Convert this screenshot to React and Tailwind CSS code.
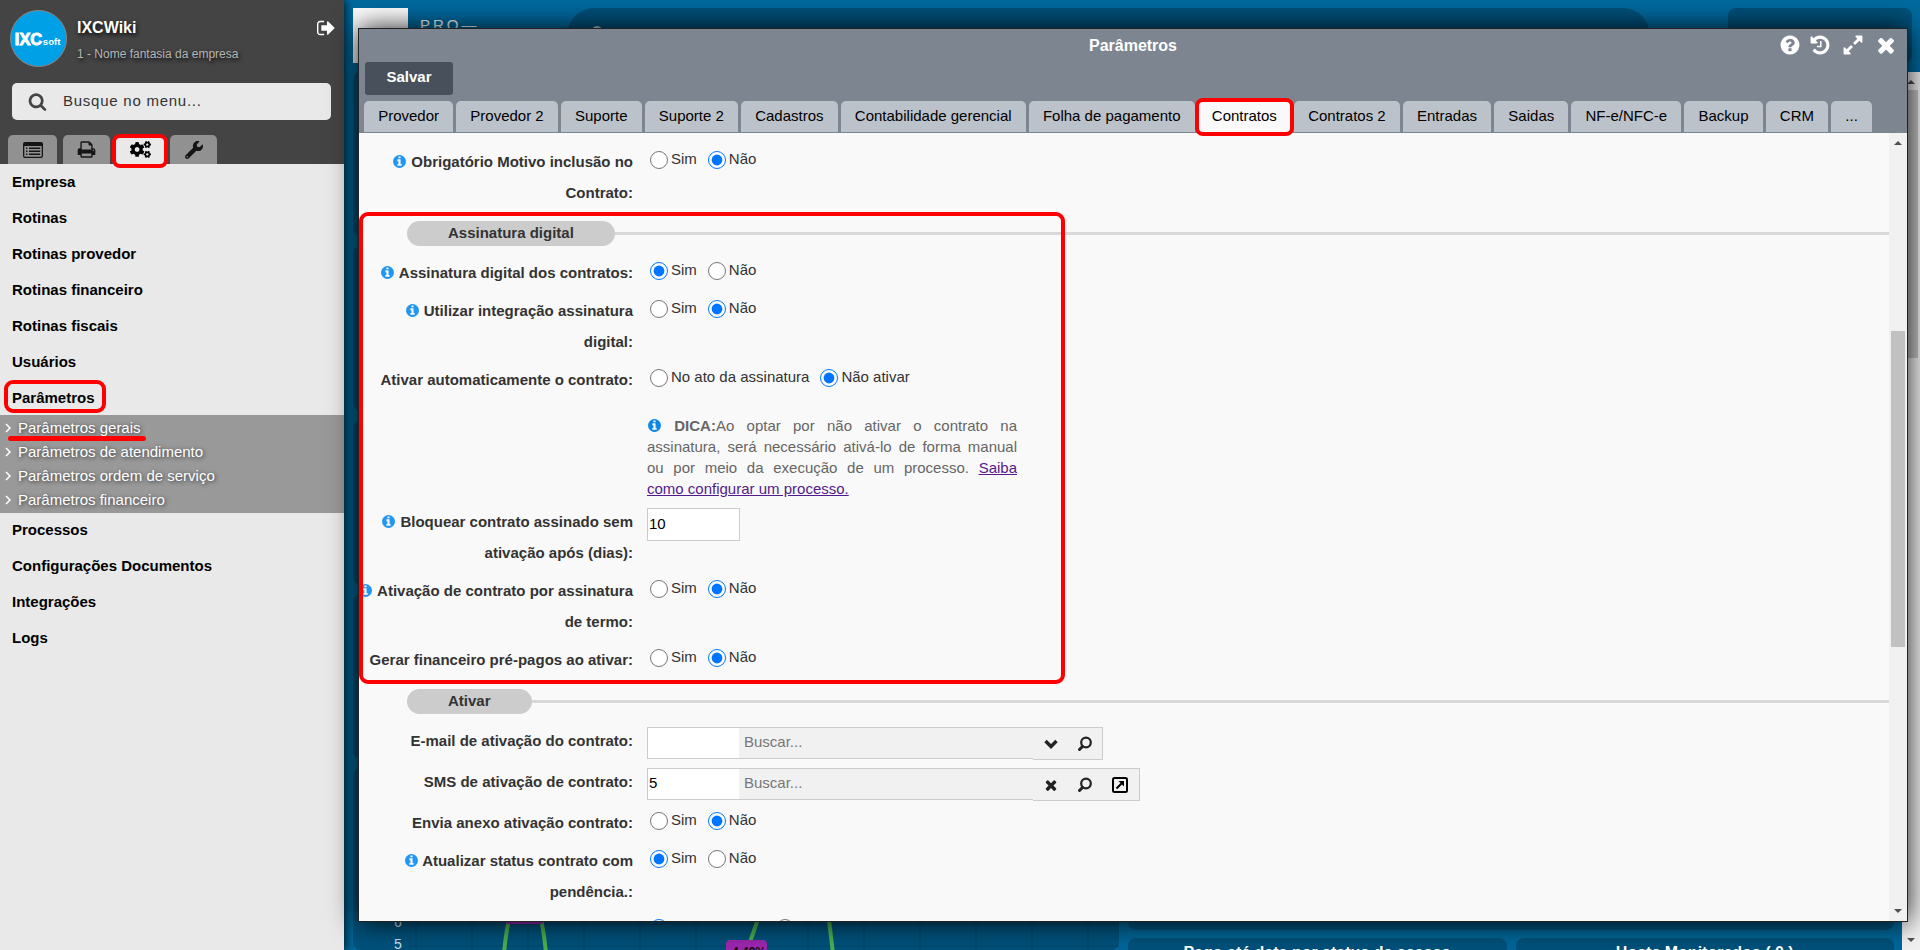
import React, { useState } from "react";
import { FaCogs, FaWrench } from "react-icons/fa";

const ICONS = {
  info:
    "M1152 1376v-160q0-14-9-23t-23-9h-96v-512q0-14-9-23t-23-9h-320q-14 0-23 9t-9 23v160q0 14 9 23t23 9h96v320h-96q-14 0-23 9t-9 23v160q0 14 9 23t23 9h448q14 0 23-9t9-23zm-128-896v-160q0-14-9-23t-23-9h-192q-14 0-23 9t-9 23v160q0 14 9 23t23 9h192q14 0 23-9t9-23zm640 416q0 209-103 385.5t-279.5 279.5-385.5 103-385.5-103-279.5-279.5-103-385.5 103-385.5 279.5-279.5 385.5-103 385.5 103 279.5 279.5 103 385.5z",
  help:
    "M1024 1376v-192q0-14-9-23t-23-9h-192q-14 0-23 9t-9 23v192q0 14 9 23t23 9h192q14 0 23-9t9-23zm256-672q0-88-55.5-163t-138.5-116-170-41q-243 0-371 213-15 24 8 42l132 100q7 6 19 6 16 0 25-12 53-68 86-92 34-24 86-24 48 0 85.5 26t37.5 59q0 38-20 61t-68 45q-63 28-115.5 86.5t-52.5 125.5v36q0 14 9 23t23 9h192q14 0 23-9t9-23q0-19 21.5-49.5t54.5-49.5q32-18 49-28.5t46-35 44.5-48 28-60.5 12.5-81zm384 192q0 209-103 385.5t-279.5 279.5-385.5 103-385.5-103-279.5-279.5-103-385.5 103-385.5 279.5-279.5 385.5-103 385.5 103 279.5 279.5 103 385.5z",
  times:
    "M1490 1322q0 40-28 68l-136 136q-28 28-68 28t-68-28l-294-294-294 294q-28 28-68 28t-68-28l-136-136q-28-28-28-68t28-68l294-294-294-294q-28-28-28-68t28-68l136-136q28-28 68-28t68 28l294 294 294-294q28-28 68-28t68 28l136 136q28 28 28 68t-28 68l-294 294 294 294q28 28 28 68z",
  history:
    "M1664 896q0 156-61 298t-164 245-245 164-298 61q-172 0-327-72.5t-264-204.5q-7-10-6.5-22.5t8.5-20.5l137-138q10-9 25-9 16 2 23 12 73 95 179 147t225 52q104 0 198.5-40.5t163.5-109.5 109.5-163.5 40.5-198.5-40.5-198.5-109.5-163.5-163.5-109.5-198.5-40.5q-98 0-188 35.5t-160 101.5l137 138q31 30 14 69-17 40-59 40h-448q-26 0-45-19t-19-45v-448q0-42 40-59 39-17 69 14l130 129q107-101 244.5-156.5t284.5-55.5q156 0 298 61t245 164 164 245 61 298zm-640-288v448q0 14-9 23t-23 9h-320q-14 0-23-9t-9-23v-64q0-14 9-23t23-9h224v-352q0-14 9-23t23-9h64q14 0 23 9t9 23z",
  expand:
    "M883 1056q0 13-10 23l-332 332 144 144q19 19 19 45t-19 45-45 19h-448q-26 0-45-19t-19-45v-448q0-26 19-45t45-19 45 19l144 144 332-332q10-10 23-10t23 10l114 114q10 10 10 23zm781-864v448q0 26-19 45t-45 19-45-19l-144-144-332 332q-10 10-23 10t-23-10l-114-114q-10-10-10-23t10-23l332-332-144-144q-19-19-19-45t19-45 45-19h448q26 0 45 19t19 45z",
  search:
    "M1216 832q0-185-131.5-316.5t-316.5-131.5-316.5 131.5-131.5 316.5 131.5 316.5 316.5 131.5 316.5-131.5 131.5-316.5zm512 832q0 52-38 90t-90 38q-54 0-90-38l-343-342q-179 124-399 124-143 0-273.5-55.5t-225-150-150-225-55.5-273.5 55.5-273.5 150-225 225-150 273.5-55.5 273.5 55.5 225 150 150 225 55.5 273.5q0 220-124 399l343 343q37 37 37 90z",
  signOut:
    "M640 1440q0 4 1 20t.5 26.5-3 23.5-10 19.5-20.5 6.5h-320q-119 0-203.5-84.5t-84.5-203.5v-704q0-119 84.5-203.5t203.5-84.5h320q13 0 22.5 9.5t9.5 22.5q0 4 1 20t.5 26.5-3 23.5-10 19.5-20.5 6.5h-320q-66 0-113 47t-47 113v704q0 66 47 113t113 47h312l11.5 1 11.5 3 8 5.5 7 9 2 13.5zm928-544q0 26-19 45l-544 544q-19 19-45 19t-45-19-19-45v-288h-448q-26 0-45-19t-19-45v-384q0-26 19-45t45-19h448v-288q0-26 19-45t45-19 45 19l544 544q19 19 19 45z",
  print:
    "M448 1536h896v-256h-896v256zm0-640h896v-384h-160q-40 0-68-28t-28-68v-160h-640v640zm1152 64q0-26-19-45t-45-19-45 19-19 45 19 45 45 19 45-19 19-45zm128 0v416q0 13-9.5 22.5t-22.5 9.5h-224v160q0 40-28 68t-68 28h-960q-40 0-68-28t-28-68v-160h-224q-13 0-22.5-9.5t-9.5-22.5v-416q0-79 56.5-135.5t135.5-56.5h64v-544q0-40 28-68t68-28h672q40 0 88 20t76 48l152 152q28 28 48 76t20 88v256h64q79 0 135.5 56.5t56.5 135.5z",
};

function Icon({ name, className }) {
  return (
    <svg viewBox="0 0 1792 1792" fill="currentColor" aria-hidden="true" className={className}>
      <path d={ICONS[name]} />
    </svg>
  );
}

function ListIcon({ className }) {
  return (
    <svg viewBox="0 0 20 16" fill="currentColor" aria-hidden="true" className={className}>
      <path
        fillRule="evenodd"
        d="M2 0h16a2 2 0 0 1 2 2v12a2 2 0 0 1-2 2H2a2 2 0 0 1-2-2V2a2 2 0 0 1 2-2zM1.300 4v9.700q0 1 1 1h15.400q1 0 1-1V4z"
      />
      <path d="M3 5.500h1.400v1.400H3zM6 5.500h11.200v1.400H6zM3 8.500h1.400v1.400H3zM6 8.500h11.200v1.400H6zM3 11.500h1.400v1.400H3zM6 11.500h11.200v1.400H6z" />
    </svg>
  );
}

function ChevronIcon() {
  return (
    <svg viewBox="0 0 14 14" fill="none" stroke="currentColor" aria-hidden="true" className="h-[14px] w-[14px]">
      <path d="M1.500 4l5.500 5.500L12.500 4" strokeWidth="3.400" />
    </svg>
  );
}

function LensIcon() {
  return (
    <svg viewBox="0 0 16 16" fill="none" stroke="currentColor" aria-hidden="true" className="h-4 w-4">
      <circle cx="9" cy="6.500" r="4.800" strokeWidth="2.200" />
      <path d="M5.500 10.500L2.500 13.500" strokeWidth="3" strokeLinecap="round" />
    </svg>
  );
}

function OpenIcon() {
  return (
    <svg viewBox="0 0 18 18" fill="none" stroke="currentColor" aria-hidden="true" className="h-[18px] w-[18px] text-black">
      <rect x="2" y="2" width="14" height="14" rx="1.500" strokeWidth="2" />
      <path d="M5.500 12.500L11.500 6.500" strokeWidth="2" />
      <path d="M7.500 5H13v5.500z" fill="currentColor" stroke="none" />
    </svg>
  );
}

const menuTop = ["Empresa", "Rotinas", "Rotinas provedor", "Rotinas financeiro", "Rotinas fiscais", "Usuários"];
const submenu = ["Parâmetros gerais", "Parâmetros de atendimento", "Parâmetros ordem de serviço", "Parâmetros financeiro"];
const menuBottom = ["Processos", "Configurações Documentos", "Integrações", "Logs"];

const tabs = [
  "Provedor",
  "Provedor 2",
  "Suporte",
  "Suporte 2",
  "Cadastros",
  "Contabilidade gerencial",
  "Folha de pagamento",
  "Contratos",
  "Contratos 2",
  "Entradas",
  "Saidas",
  "NF-e/NFC-e",
  "Backup",
  "CRM",
  "...",
];

function MenuItem({ children, marked }) {
  return (
    <li>
      <a href="#" className="relative flex h-9 items-center px-3 font-bold text-black">
        {children}
        {marked && <span className="absolute top-0 bottom-[3px] left-1 w-[102px] rounded-[9px] border-4 border-[#ff0000]" />}
      </a>
    </li>
  );
}

function Sidebar() {
  return (
    <aside className="relative z-10 flex w-[344px] shrink-0 flex-col bg-[#e9e9e9] shadow-[2px_0_8px_rgba(0,0,0,0.7)]">
      <header className="flex h-[164px] flex-col bg-[#444444]">
        <div className="flex h-[83px] items-start pt-[10px] pl-[10px]">
          <div className="flex h-[57px] w-[57px] items-center justify-center rounded-full border border-[#8a8a8a] bg-[#00a0e6] text-white">
            <svg viewBox="0 0 57 57" className="h-full w-full" role="img" aria-label="IXCsoft">
              <text x="4" y="35" fontFamily="Liberation Sans, sans-serif" fontWeight="bold" fontSize="17" fill="#fff" stroke="#fff">
                IXC
              </text>
              <text x="33" y="35" fontFamily="Liberation Sans, sans-serif" fontWeight="bold" fontSize="10" fill="#fff">
                soft
              </text>
            </svg>
          </div>
          <div className="ml-[10px] flex-1 [text-shadow:1px_2px_4px_#000]">
            <p className="mt-2 text-base leading-5 font-bold text-white">IXCWiki</p>
            <p className="mt-2 text-xs leading-4 text-[#b5b5b5]">1 - Nome fantasia da empresa</p>
          </div>
          <button type="button" aria-label="Sair" className="mt-2 mr-[7px] text-white">
            <Icon name="signOut" className="h-5 w-5" />
          </button>
        </div>
        <label className="mr-[13px] ml-3 flex h-[37px] items-center rounded-[5px] bg-[#e9e9e9] pl-4 text-[#444444]">
          <Icon name="search" className="h-[19px] w-[19px]" />
          <input
            type="text"
            aria-label="Busque no menu"
            placeholder="Busque no menu..."
            className="ml-4 w-60 text-[15px] tracking-wider outline-none placeholder:text-[#333333]"
          />
        </label>
        <nav className="mt-[15px] flex h-[29px] gap-[6px] pl-2 text-[#151515]">
          <button type="button" aria-label="Menu" className="flex w-[49px] items-center justify-center rounded-t-[5px] bg-[#919191]">
            <ListIcon className="h-4 w-5" />
          </button>
          <button type="button" aria-label="Relatórios" className="flex w-[47px] items-center justify-center rounded-t-[5px] bg-[#919191]">
            <Icon name="print" className="h-[19px] w-[19px]" />
          </button>
          <button type="button" aria-label="Configurações" className="relative flex w-12 items-center justify-center rounded-t-[5px] bg-[#e9e9e9] text-black">
            <FaCogs className="h-[21px] w-[21px]" />
            <span className="absolute -inset-x-1 -top-px -bottom-1 rounded-[8px] border-4 border-[#ff0000]" />
          </button>
          <button type="button" aria-label="Ferramentas" className="flex w-[47px] items-center justify-center rounded-t-[5px] bg-[#919191]">
            <FaWrench className="h-[18px] w-[18px]" />
          </button>
        </nav>
      </header>
      <ul>
        {menuTop.map((item) => (
          <MenuItem key={item}>{item}</MenuItem>
        ))}
        <MenuItem marked>Parâmetros</MenuItem>
        <li>
          <ul className="-my-px bg-[#999999] py-px text-white [text-shadow:1px_1px_4px_rgba(0,0,0,0.7)]">
            {submenu.map((item, i) => (
              <li key={item}>
                <a href="#" className="relative flex h-6 items-center gap-[6px] pl-1">
                  <svg viewBox="0 0 8 10" fill="none" stroke="currentColor" strokeWidth="1.500" className="h-[10px] w-2">
                    <path d="M2 1l4 4-4 4" />
                  </svg>
                  <span>{item}</span>
                  {i === 0 && <span className="absolute -bottom-px left-2 h-[5px] w-[138px] rounded-full bg-[#ff0000]" />}
                </a>
              </li>
            ))}
          </ul>
        </li>
        {menuBottom.map((item) => (
          <MenuItem key={item}>{item}</MenuItem>
        ))}
      </ul>
    </aside>
  );
}

function Panel({ className, children }) {
  return <div className={`rounded-[8px] bg-[#00517b] ${className}`}>{children}</div>;
}

function Chart() {
  return (
    <svg className="absolute bottom-0 left-0 h-[185px] w-full" aria-hidden="true">
      <g stroke="#00466b">
        {[63, 119, 175, 231, 287, 343, 399, 455, 511, 567, 623, 679, 735].map((x) => (
          <line key={x} x1={x} x2={x} y1="0" y2="185" />
        ))}
        <line x1="57" x2="766" y1="159" y2="159" />
        <line x1="57" x2="766" y1="181" y2="181" />
      </g>
      <g fill="none" stroke="#4caf50" strokeWidth="4">
        <path d="M151 188Q154 155 162 133Q172 110 182 133Q190 155 193 188" />
        <path d="M396 180L413 131C425 95 460 95 473 131L480 188" />
      </g>
      <rect x="152" y="140" width="38" height="19" rx="3" fill="#9c27b0" />
      <rect x="373" y="175" width="41" height="20" rx="4" fill="#9c27b0" />
      <g fontFamily="Liberation Sans, sans-serif" fontSize="14" fill="#cfe0ea">
        <text x="41" y="162">6</text>
        <text x="41" y="184">5</text>
      </g>
      <text x="379" y="191" fontFamily="Liberation Sans, sans-serif" fontSize="12" fontWeight="bold" fill="#111">
        4.49%
      </text>
    </svg>
  );
}

function Desktop() {
  return (
    <main className="flex min-w-0 flex-1 flex-col bg-[#006699]">
      <div className="flex h-[72px] items-start bg-[#006a9f] pt-2 pr-2 pl-[9px]">
        <div className="h-[55px] w-[55px] bg-white" />
        <p className="ml-3 w-[147px] pt-[7px] leading-5 tracking-[0.2em] text-white">PRO—</p>
        <div className="mr-[78px] h-[55px] flex-1 rounded-full bg-[#00517b] pt-[17px] pl-6 text-[#b9cfdb]">
          <Icon name="search" className="h-[14px] w-[14px]" />
        </div>
        <Panel className="h-[55px] w-[184px]" />
      </div>
      <div className="flex min-h-0 flex-1">
        <div className="flex min-w-0 flex-1 gap-[9px] overflow-hidden pr-2 pl-[9px]">
          <div className="flex flex-1 flex-col gap-[9px]">
            <Panel className="h-[165px] shrink-0" />
            <Panel className="h-[165px] shrink-0" />
            <Panel className="h-[165px] shrink-0" />
            <Panel className="h-[165px] shrink-0" />
            <Panel className="relative min-h-0 flex-1">
              <Chart />
            </Panel>
          </div>
          <div className="flex flex-1 flex-col gap-2">
            <Panel className="flex-1" />
            <div className="flex h-[12px] gap-[9px]">
              <Panel className="h-10 flex-1 pt-[5px] text-center text-base leading-5 font-bold text-white">
                Pago até data por status de acesso
              </Panel>
              <Panel className="h-10 flex-1 pt-[5px] text-center text-base leading-5 font-bold text-white">
                Hosts Monitorados ( 0 )
              </Panel>
            </div>
          </div>
        </div>
        <Scrollbar before="flex-[0]" thumb="flex-[268]" after="flex-[573]" />
      </div>
    </main>
  );
}

function Scrollbar({ before, thumb, after }) {
  return (
    <div className="flex w-[18px] shrink-0 flex-col bg-[#f1f1f1] px-[2px]" aria-hidden="true">
      <svg viewBox="0 0 14 18" className="h-[18px] w-[14px]">
        <path d="M3 12h8L7 8z" fill="#505050" />
      </svg>
      <div className={before} />
      <div className={`bg-[#c1c1c1] ${thumb}`} />
      <div className={after} />
      <svg viewBox="0 0 14 18" className="h-[18px] w-[14px]">
        <path d="M3 6h8l-4 4z" fill="#505050" />
      </svg>
    </div>
  );
}

function Label({ info, htmlFor, children }) {
  return (
    <label htmlFor={htmlFor} className="w-[274px] shrink-0 text-right leading-[31px] font-bold text-[#333333]">
      {info && <Icon name="info" className="-ml-1 inline h-[15px] w-[15px] align-[-2px] text-[#2196f3]" />}
      {info && " "}
      {children}
    </label>
  );
}

function RadioRow({ id, label, info, value, options = ["Sim", "Não"] }) {
  const [selected, setSelected] = useState(value);

  return (
    <div role="radiogroup" aria-labelledby={id} className="mb-[7px] flex items-start">
      <Label info={info}>
        <span id={id}>{label}</span>
      </Label>
      <div className="ml-[17px] flex h-7 items-center gap-[11px]">
        {options.map((option) => (
          <label key={option} className="flex items-center gap-[3px] text-[#333333]">
            <input
              type="radio"
              name={id}
              checked={selected === option}
              onChange={() => setSelected(option)}
              className="h-[18px] w-[18px]"
            />
            <span className="pb-[2px] leading-5">{option}</span>
          </label>
        ))}
      </div>
    </div>
  );
}

function Section({ title }) {
  return (
    <div className="mb-[11px] flex items-center pt-[6px] pl-12">
      <h2 className="h-[25px] rounded-full bg-[#cccccc] px-[41px] leading-6 font-bold text-[#333333]">{title}</h2>
      <div className="h-[3px] flex-1 bg-[#d8d8d8]" />
    </div>
  );
}

function SearchRow({ id, label, value, filled }) {
  return (
    <div className="mb-[7px] flex h-[34px] items-start">
      <Label htmlFor={id}>{label}</Label>
      <div className="mt-[2px] ml-[14px] flex">
        <input
          id={id}
          type="text"
          defaultValue={value}
          className="h-8 w-[92px] border border-r-0 border-[#cccccc] bg-white px-px pb-[3px] text-black outline-none"
        />
        <input
          type="text"
          aria-label={`Buscar ${label}`}
          placeholder="Buscar..."
          className="h-8 w-[294px] border-y border-[#cccccc] bg-[#f1f1f1] px-[5px] pb-[3px] outline-none placeholder:text-[#777777]"
        />
        <div className="flex h-[33px] items-center border border-l-0 border-[#cccccc] bg-[#f1f1f1] pr-px text-[#222222]">
          <button type="button" aria-label={filled ? "Limpar" : "Abrir lista"} className="flex w-[35px] justify-center">
            {filled ? <Icon name="times" className="h-4 w-4" /> : <ChevronIcon />}
          </button>
          <button type="button" aria-label="Pesquisar" className="flex w-[33px] justify-center">
            <LensIcon />
          </button>
          {filled && (
            <button type="button" aria-label="Abrir cadastro" className="flex w-[37px] justify-center">
              <OpenIcon />
            </button>
          )}
        </div>
      </div>
    </div>
  );
}

function ContractForm() {
  return (
    <form className="min-w-0 flex-1 overflow-hidden pt-[13px]">
      <RadioRow id="motivo" info label="Obrigatório Motivo inclusão no Contrato:" value="Não" />

      <div className="relative pb-px">
        <Section title="Assinatura digital" />
        <RadioRow id="assinatura" info label="Assinatura digital dos contratos:" value="Sim" />
        <RadioRow id="integracao" info label="Utilizar integração assinatura digital:" value="Não" />
        <RadioRow
          id="ativar"
          label="Ativar automaticamente o contrato:"
          value="Não ativar"
          options={["No ato da assinatura", "Não ativar"]}
        />
        <p className="mt-5 mb-[7px] ml-[288px] w-[370px] text-justify leading-[21px] text-[#666666]">
          <Icon name="info" className="inline h-[15px] w-[15px] align-[-2px] text-[#0d87e9]" /> <b>DICA:</b>Ao optar por não
          ativar o contrato na assinatura, será necessário ativá-lo de forma manual ou por meio da execução de um processo.{" "}
          <a href="#" className="text-[#551a8b] underline">
            Saiba como&nbsp;configurar um processo.
          </a>
        </p>
        <div className="mb-[7px] flex items-start">
          <Label info htmlFor="bloquear">
            Bloquear contrato assinado sem ativação após (dias):
          </Label>
          <input
            id="bloquear"
            type="text"
            defaultValue="10"
            className="mt-[2px] ml-[14px] h-[33px] w-[93px] border border-[#cccccc] bg-white px-px pb-[2px] text-black outline-none"
          />
        </div>
        <RadioRow id="termo" info label="Ativação de contrato por assinatura de termo:" value="Não" />
        <RadioRow id="prepago" label="Gerar financeiro pré-pagos ao ativar:" value="Não" />
        <div className="pointer-events-none absolute -top-[3px] -bottom-px left-0 w-[706px] rounded-[9px] border-4 border-[#ff0000]" />
      </div>

      <Section title="Ativar" />
      <SearchRow id="email" label="E-mail de ativação do contrato:" value="" />
      <SearchRow id="sms" label="SMS de ativação de contrato:" value="5" filled />
      <RadioRow id="anexo" label="Envia anexo ativação contrato:" value="Não" />
      <RadioRow id="pendencia" info label="Atualizar status contrato com pendência.:" value="Sim" />
      <div className="flex gap-[108px] pt-[5px] pl-[291px]">
        <input type="radio" name="proximo" aria-label="Primeira opção" defaultChecked className="h-[18px] w-[18px]" />
        <input type="radio" name="proximo" aria-label="Segunda opção" className="h-[18px] w-[18px]" />
      </div>
    </form>
  );
}

function ParametersWindow() {
  const [active, setActive] = useState("Contratos");

  return (
    <section className="absolute top-7 right-3 bottom-[28px] left-[358px] z-20 flex flex-col border border-[#222222] bg-[#f9f9f9] shadow-[0_0_26px_rgba(0,0,0,0.9)]">
      <header className="flex flex-col bg-[#7d8690]">
        <div className="relative flex h-[33px] items-center justify-center">
          <h1 className="text-base font-bold text-white">Parâmetros</h1>
          <div className="absolute top-1 right-[9px] flex items-center text-white">
            <button type="button" aria-label="Ajuda" className="mr-2">
              <Icon name="help" className="h-[22px] w-[22px]" />
            </button>
            <button type="button" aria-label="Histórico" className="mr-[11px]">
              <Icon name="history" className="h-[22px] w-[22px]" />
            </button>
            <button type="button" aria-label="Expandir" className="mr-[10px]">
              <Icon name="expand" className="h-[22px] w-[22px]" />
            </button>
            <button type="button" aria-label="Fechar">
              <Icon name="times" className="h-6 w-6" />
            </button>
          </div>
        </div>
        <button type="button" className="ml-[6px] h-[33px] w-[88px] rounded-[3px] bg-[#47505b] pb-[2px] font-bold text-white">
          Salvar
        </button>
        <div role="tablist" className="mt-[6px] mb-px flex h-[31px] gap-[3px] pr-[35px] pl-[5px]">
          {tabs.map((tab) => (
            <button
              key={tab}
              type="button"
              role="tab"
              aria-selected={active === tab}
              onClick={() => setActive(tab)}
              className={`relative grow rounded-t-[5px] px-[14px] whitespace-nowrap text-black ${active === tab ? "bg-[#f9f9f9]" : "bg-[#bcc2c9]"}`}
            >
              {tab}
              {tab === "Contratos" && (
                <span className="absolute -inset-x-[3px] -top-[3px] -bottom-1 rounded-[8px] border-4 border-[#ff0000]" />
              )}
            </button>
          ))}
        </div>
      </header>
      <div className="flex min-h-0 flex-1">
        <ContractForm />
        <Scrollbar before="flex-[180]" thumb="flex-[316]" after="flex-[256]" />
      </div>
    </section>
  );
}

function App() {
  return (
    <div className="relative flex h-screen overflow-hidden font-['Liberation_Sans',Arial,sans-serif] text-[15px]">
      <Sidebar />
      <Desktop />
      <ParametersWindow />
    </div>
  );
}

export default App;
